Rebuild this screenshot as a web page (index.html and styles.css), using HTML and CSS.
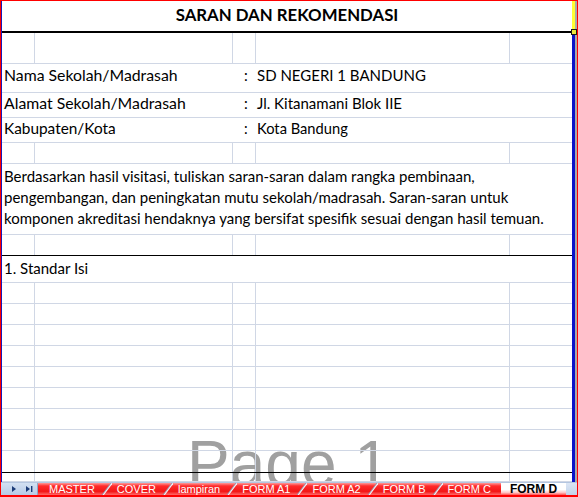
FILE: index.html
```html
<!DOCTYPE html>
<html>
<head>
<meta charset="utf-8">
<title>Saran dan Rekomendasi</title>
<link rel="stylesheet" href="styles.css">
</head>
<body>
<div class="window">
  <div class="main">
    <div class="page">
      <div class="watermark">Page 1</div>
      <div class="row title-row"><span class="title">SARAN DAN REKOMENDASI</span></div>
      <div class="row grid h31"><span></span><span></span><span></span><span></span><span></span></div>
      <div class="row info h29"><span class="label">Nama Sekolah/Madrasah</span><span class="colon">:</span><span class="value">SD NEGERI 1 BANDUNG</span></div>
      <div class="row info h25"><span class="label">Alamat Sekolah/Madrasah</span><span class="colon">:</span><span class="value">Jl. Kitanamani Blok IIE</span></div>
      <div class="row info h25 small"><span class="label">Kabupaten/Kota</span><span class="colon">:</span><span class="value">Kota Bandung</span></div>
      <div class="row grid h21"><span></span><span></span><span></span><span></span><span></span></div>
      <div class="row para"><p>Berdasarkan hasil visitasi, tuliskan saran-saran dalam rangka pembinaan,<br>pengembangan, dan peningkatan mutu sekolah/madrasah. Saran-saran untuk<br>komponen akreditasi hendaknya yang bersifat spesifik sesuai dengan hasil temuan.</p></div>
      <div class="row grid h21 dark"><span></span><span></span><span></span><span></span><span></span></div>
      <div class="row standar"><span>1. Standar Isi</span></div>
      <div class="row grid h21"><span></span><span></span><span></span><span></span><span></span></div>
      <div class="row grid h21"><span></span><span></span><span></span><span></span><span></span></div>
      <div class="row grid h21"><span></span><span></span><span></span><span></span><span></span></div>
      <div class="row grid h21"><span></span><span></span><span></span><span></span><span></span></div>
      <div class="row grid h21"><span></span><span></span><span></span><span></span><span></span></div>
      <div class="row grid h21"><span></span><span></span><span></span><span></span><span></span></div>
      <div class="row grid h21"><span></span><span></span><span></span><span></span><span></span></div>
      <div class="row grid h21"><span></span><span></span><span></span><span></span><span></span></div>
      <div class="row grid h22 dark"><span></span><span></span><span></span><span></span><span></span></div>
      <div class="row grid filler"><span></span><span></span><span></span><span></span><span></span></div>
    </div>
    <div class="vbar"><div class="vbar-top"></div><div class="vbar-rest"></div></div>
    <div class="gutter"></div>
    <div class="handle"></div>
  </div>
  <div class="tabbar">
    <div class="nav">
      <svg width="37" height="12" viewBox="0 0 37 12">
        <polygon points="11,3 15,6 11,9" fill="#1d3c78"/>
        <polygon points="25,3 29,6 25,9" fill="#1d3c78"/>
        <rect x="30" y="3" width="1.4" height="6" fill="#1d3c78"/>
      </svg>
    </div>
    <div class="tabs">
      <span class="tab first">MASTER</span>
      <svg class="sep" width="11" height="12" viewBox="0 0 11 12"><line x1="1" y1="12" x2="10" y2="0" stroke="#8a9bb4" stroke-width="1"/><line x1="2.2" y1="12" x2="11" y2="0.3" stroke="#eef3fb" stroke-width="1.2"/></svg>
      <span class="tab">COVER</span>
      <svg class="sep" width="11" height="12" viewBox="0 0 11 12"><line x1="1" y1="12" x2="10" y2="0" stroke="#8a9bb4" stroke-width="1"/><line x1="2.2" y1="12" x2="11" y2="0.3" stroke="#eef3fb" stroke-width="1.2"/></svg>
      <span class="tab">lampiran</span>
      <svg class="sep" width="11" height="12" viewBox="0 0 11 12"><line x1="1" y1="12" x2="10" y2="0" stroke="#8a9bb4" stroke-width="1"/><line x1="2.2" y1="12" x2="11" y2="0.3" stroke="#eef3fb" stroke-width="1.2"/></svg>
      <span class="tab">FORM A1</span>
      <svg class="sep" width="11" height="12" viewBox="0 0 11 12"><line x1="1" y1="12" x2="10" y2="0" stroke="#8a9bb4" stroke-width="1"/><line x1="2.2" y1="12" x2="11" y2="0.3" stroke="#eef3fb" stroke-width="1.2"/></svg>
      <span class="tab">FORM A2</span>
      <svg class="sep" width="11" height="12" viewBox="0 0 11 12"><line x1="1" y1="12" x2="10" y2="0" stroke="#8a9bb4" stroke-width="1"/><line x1="2.2" y1="12" x2="11" y2="0.3" stroke="#eef3fb" stroke-width="1.2"/></svg>
      <span class="tab">FORM B</span>
      <svg class="sep" width="11" height="12" viewBox="0 0 11 12"><line x1="1" y1="12" x2="10" y2="0" stroke="#8a9bb4" stroke-width="1"/><line x1="2.2" y1="12" x2="11" y2="0.3" stroke="#eef3fb" stroke-width="1.2"/></svg>
      <span class="tab">FORM C</span>
      <span class="tab active">FORM D</span>
      <span class="tab-end"></span>
    </div>
  </div>
</div>
</body>
</html>
```

FILE: styles.css
```css
* { box-sizing: border-box; margin: 0; padding: 0; }
html, body { width: 578px; height: 497px; overflow: hidden; background: #fff; }
body { font-family: Lato, "Liberation Sans", sans-serif; color: #000; }

.window {
  width: 578px; height: 497px;
  border: 1px solid #ff0000; border-bottom: none;
  display: flex; flex-direction: column;
}
.main { display: flex; height: 481px; position: relative; flex: none; }
.page {
  width: 571px; flex: none;
  border-left: 1px solid #1a1ab8;
  display: flex; flex-direction: column;
  position: relative; overflow: hidden;
}
.row { flex: none; border-bottom: 1px solid #d0d7e5; position: relative; }
.row.dark { border-bottom-color: #000; }

.title-row {
  height: 32px; border-bottom: 2px solid #000;
  display: flex; justify-content: center; align-items: flex-start;
  padding-top: 4px;
}
.title { font-weight: 700; font-size: 16.8px; line-height: 20px; }

.grid { display: grid; grid-template-columns: 33px 198px 23px 254px 1fr; }
.grid span { border-right: 1px solid #d0d7e5; }
.grid span:last-child { border-right: none; }
.h31 { height: 31px; }
.h29 { height: 29px; }
.h25 { height: 25px; }
.h21 { height: 21px; }
.h22 { height: 22px; }
.filler { flex: 1; }

.info {
  display: grid; grid-template-columns: 239px 14px 1fr;
  align-items: last baseline; align-content: end;
  padding-left: 2px;
}
.info.h29 { padding-bottom: 8px; }
.info.h25 { padding-bottom: 5px; }
.label { font-size: 15.8px; line-height: 18px; }
.colon, .value { font-size: 15px; line-height: 18px; }
.small .label { font-size: 15.4px; }
.small .colon, .small .value { font-size: 14.7px; }
.colon { padding-left: 1px; }

.para { height: 71px; padding: 2px 0 0 2px; }
.para p { font-size: 15px; line-height: 21px; }

.standar { height: 27px; padding: 3px 0 0 2px; font-size: 15px; line-height: 18px; }

.watermark {
  position: absolute; left: 185px; top: 447px;
  font-family: "Liberation Sans", Arial, sans-serif;
  font-size: 64px; line-height: 33px; height: 33px; color: #a0a0a0;
  white-space: nowrap;
}

.vbar { width: 3px; flex: none; display: flex; flex-direction: column; }
.vbar-top { height: 29px; background: #ffff33; }
.vbar-rest { flex: 1; background: #0a14c8; }
.gutter { width: 2px; flex: none; background: #a9a9a9; }
.handle {
  position: absolute; left: 570px; top: 28px;
  width: 6px; height: 6px;
  border: 1px solid #1a1a1a; background: #e8e840;
}

.tabbar {
  height: 15px; flex: none; display: flex;
  border-top: 1px solid #b4c6e0; border-bottom: 2px solid #ff0000;
  font-family: "Liberation Sans", Arial, sans-serif; font-size: 11px;
}
.nav {
  width: 37px; flex: none;
  background: linear-gradient(#d3e0f2, #b7cbe7);
  border-right: 1px solid #8fa6c6;
}
.nav svg { display: block; }
.tabs { flex: 1; display: flex; align-items: stretch; background: linear-gradient(#ff9a9a 0, #ff2b2b 25%, #f31616 70%, #ff6b6b 100%); }
.tab { color: #fff; line-height: 12px; padding: 0 6px 0 5px; white-space: nowrap; }
.tab.first { padding-left: 11px; }
.sep { display: block; flex: none; }
.tab.active {
  color: #000; font-weight: 700; font-size: 12px;
  background: linear-gradient(#ffffff 0, #ffffff 55%, #ffc4c4 80%, #ff5050 100%);
  padding: 0 9px 0 9px; margin-left: 4px;
}
.tab-end { flex: 1; background: linear-gradient(#dbe6f5, #c2d3ea); }
```
